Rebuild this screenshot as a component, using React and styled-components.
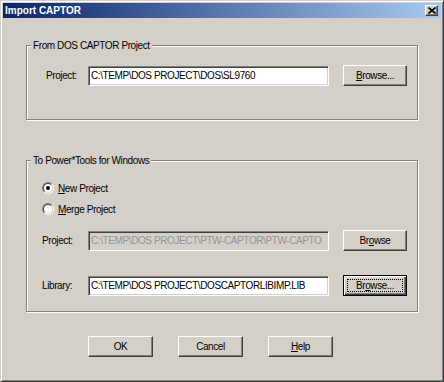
import React from "react";
import styled, { createGlobalStyle } from "styled-components";

const Global = createGlobalStyle`
  html, body { margin: 0; padding: 0; background: #d4d0c8; }
  body { font-family: "Liberation Sans", Arial, sans-serif; }
`;

const Window = styled.div`
  box-sizing: border-box;
  width: 444px;
  height: 382px;
  padding: 2px;
  background: #d4d0c8;
  border: 1px solid;
  border-color: #d4d0c8 #404040 #404040 #d4d0c8;
  box-shadow: inset 1px 1px 0 #fff, inset -1px -1px 0 #808080;
  display: flex;
  flex-direction: column;
  font-family: "Liberation Sans", Arial, sans-serif;
  font-size: 10px;
  letter-spacing: -0.4px;
  color: #000;
`;

const TitleBar = styled.div`
  height: 15px;
  display: flex;
  align-items: center;
  justify-content: space-between;
  padding: 0 3px 0 2px;
  background: linear-gradient(to right, #0a246a, #a6caf0);
`;

const Title = styled.span`
  color: #fff;
  font-weight: bold;
  font-size: 10px;
  letter-spacing: 0;
  line-height: 15px;
`;

const CloseButton = styled.div`
  box-sizing: border-box;
  width: 13px;
  height: 11px;
  display: flex;
  align-items: center;
  justify-content: center;
  background: #d4d0c8;
  border: 1px solid;
  border-color: #fff #404040 #404040 #fff;
  box-shadow: inset -1px -1px 0 #808080;
`;

const Body = styled.div`
  padding: 0 23px;
  display: flex;
  flex-direction: column;
`;

const Group = styled.div`
  position: relative;
  box-sizing: border-box;
  height: ${(p) => p.$height}px;
  margin-top: ${(p) => p.$top}px;
  border: 1px solid #808080;
  box-shadow: inset 1px 1px 0 #fff, 1px 1px 0 #fff;
  display: flex;
  flex-direction: column;
`;

const Legend = styled.span`
  position: absolute;
  top: -7px;
  left: 4px;
  padding: 0 2px;
  line-height: 13px;
  background: #d4d0c8;
  white-space: nowrap;
`;

const FieldRow = styled.div`
  margin-top: ${(p) => p.$top}px;
  height: 21px;
  display: grid;
  grid-template-columns: 47px 241px 64px;
  column-gap: 14px;
  align-items: end;
`;

const Label = styled.span`
  padding-left: ${(p) => p.$indent}px;
  line-height: 20px;
  white-space: nowrap;
`;

const TextBox = styled.div`
  box-sizing: border-box;
  height: 20px;
  padding: 0 2px;
  border: 1px solid;
  border-color: #808080 #fff #fff #808080;
  box-shadow: inset 1px 1px 0 #404040, inset -1px -1px 0 #d4d0c8;
  background: ${(p) => (p.$disabled ? "#d4d0c8" : "#fff")};
  color: ${(p) => (p.$disabled ? "#949494" : "#000")};
  line-height: 18px;
  white-space: nowrap;
  overflow: hidden;
`;

const Button = styled.div`
  position: relative;
  box-sizing: border-box;
  width: ${(p) => p.$width || 64}px;
  height: 21px;
  display: flex;
  align-items: center;
  justify-content: center;
  background: #d4d0c8;
  white-space: nowrap;
  ${(p) =>
    p.$default
      ? `
    border: 1px solid #000;
    box-shadow: inset 1px 1px 0 #fff, inset -1px -1px 0 #404040, inset -2px -2px 0 #808080;
    &::after {
      content: "";
      position: absolute;
      inset: 3px;
      border: 1px dotted #000;
    }
  `
      : `
    border: 1px solid;
    border-color: #fff #404040 #404040 #fff;
    box-shadow: inset -1px -1px 0 #808080;
  `}
`;

const Key = styled.span`
  text-decoration: underline;
  text-underline-offset: 1px;
`;

const RadioRow = styled.div`
  margin-top: ${(p) => p.$top}px;
  height: 16px;
  display: flex;
  align-items: center;
  gap: 4px;
  padding-left: 15px;
`;

const RadioOuter = styled.span`
  box-sizing: border-box;
  width: 12px;
  height: 12px;
  border-radius: 50%;
  border: 1px solid;
  border-color: #808080 #fff #fff #808080;
  display: flex;
`;

const RadioInner = styled.span`
  box-sizing: border-box;
  flex: 1;
  border-radius: 50%;
  border: 1px solid;
  border-color: #404040 #d4d0c8 #d4d0c8 #404040;
  background: #fff;
  display: flex;
  align-items: center;
  justify-content: center;
`;

const Dot = styled.span`
  width: 4px;
  height: 4px;
  border-radius: 50%;
  background: #000;
`;

const ButtonBar = styled.div`
  margin-top: 24px;
  padding-left: 62px;
  display: flex;
  gap: 25px;
`;

function Radio({ checked, top, children }) {
  return (
    <RadioRow $top={top}>
      <RadioOuter>
        <RadioInner>{checked && <Dot />}</RadioInner>
      </RadioOuter>
      <span>{children}</span>
    </RadioRow>
  );
}

export default function App() {
  return (
    <>
      <Global />
      <Window>
        <TitleBar>
          <Title>Import CAPTOR</Title>
          <CloseButton>
            <svg width="8" height="7" viewBox="0 0 8 7">
              <path d="M0.5 0.5 L7.5 6.5 M7.5 0.5 L0.5 6.5" stroke="#000" strokeWidth="1.6" />
            </svg>
          </CloseButton>
        </TitleBar>
        <Body>
          <Group $height={75} $top={27}>
            <Legend>From DOS CAPTOR Project</Legend>
            <FieldRow $top={19}>
              <Label $indent={19}>Project:</Label>
              <TextBox>C:\TEMP\DOS PROJECT\DOS\SL9760</TextBox>
              <Button>
                <Key>B</Key>rowse...
              </Button>
            </FieldRow>
          </Group>
          <Group $height={152} $top={40}>
            <Legend>To Power*Tools for Windows</Legend>
            <Radio checked top={19}>
              <Key>N</Key>ew Project
            </Radio>
            <Radio top={5}>
              <Key>M</Key>erge Project
            </Radio>
            <FieldRow $top={13}>
              <Label $indent={15}>Project:</Label>
              <TextBox $disabled>C:\TEMP\DOS PROJECT\PTW-CAPTOR\PTW-CAPTO</TextBox>
              <Button>
                Br<Key>o</Key>wse
              </Button>
            </FieldRow>
            <FieldRow $top={24}>
              <Label $indent={15}>Library:</Label>
              <TextBox>C:\TEMP\DOS PROJECT\DOSCAPTORLIBIMP.LIB</TextBox>
              <Button $default>
                Br<Key>o</Key>wse...
              </Button>
            </FieldRow>
          </Group>
          <ButtonBar>
            <Button $width={65}>OK</Button>
            <Button $width={65}>Cancel</Button>
            <Button $width={65}>
              <Key>H</Key>elp
            </Button>
          </ButtonBar>
        </Body>
      </Window>
    </>
  );
}
